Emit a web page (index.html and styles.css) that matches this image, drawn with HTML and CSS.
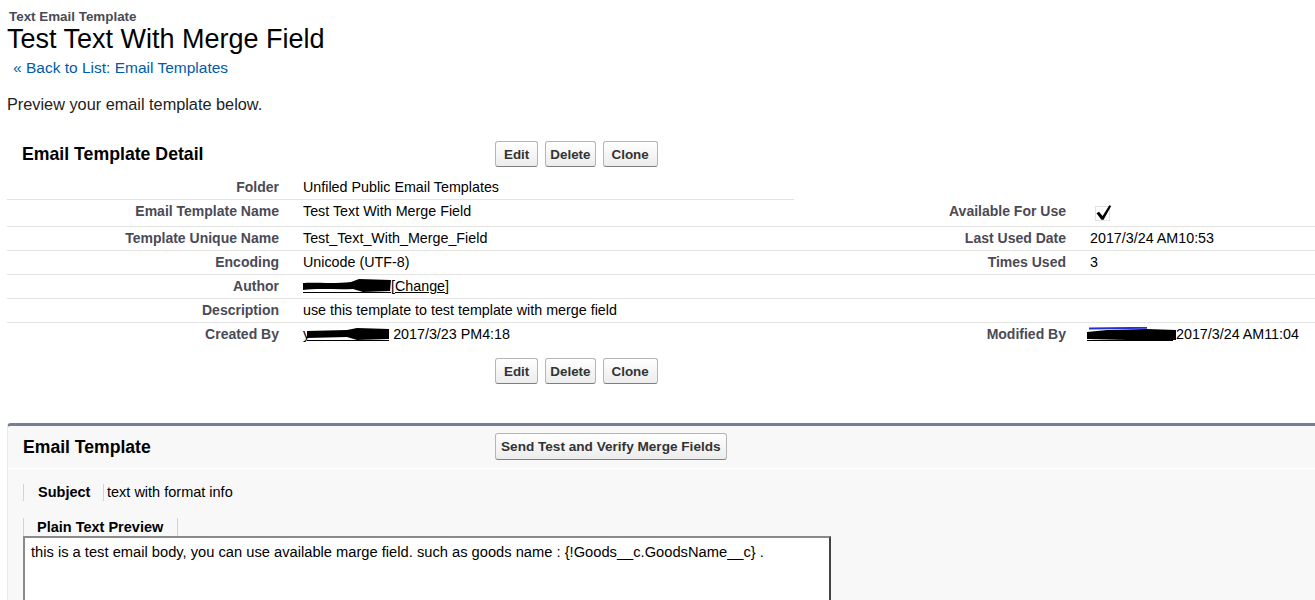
FILE: index.html
```html
<!DOCTYPE html>
<html>
<head>
<meta charset="utf-8">
<title>Test Text With Merge Field</title>
<link rel="stylesheet" href="styles.css">
</head>
<body>
<div class="page">
  <div class="page-head">
    <h2 class="page-type">Text Email Template</h2>
    <h1 class="page-title">Test Text With Merge Field</h1>
    <div class="back"><span class="raquo">«</span> <a href="#">Back to List: Email Templates</a></div>
  </div>
  <p class="intro">Preview your email template below.</p>

  <section class="detail">
    <div class="block-head">
      <div class="block-title"><h3>Email Template Detail</h3></div>
      <div class="btns">
        <button class="btn">Edit</button>
        <button class="btn btn-tight">Delete</button>
        <button class="btn">Clone</button>
      </div>
    </div>

    <div class="grid">
      <div class="lbl">Folder</div>
      <div class="val">Unfiled Public Email Templates</div>
      <div class="lbl nb"></div>
      <div class="val nb"></div>

      <div class="lbl">Email Template Name</div>
      <div class="val">Test Text With Merge Field</div>
      <div class="lbl">Available For Use</div>
      <div class="val"><svg class="chk" width="24" height="17" viewBox="0 0 24 17"><rect x="5.5" y="1.5" width="14" height="14" fill="none" stroke="#c4c4c4" stroke-dasharray="1 1"/><path d="M6.5 8.2 L9 6.8 L12.6 11 L19.3 0.2 L21.2 1 L13.6 14.8 L11.4 14.8 Z" fill="#000"/></svg></div>

      <div class="lbl">Template Unique Name</div>
      <div class="val">Test_Text_With_Merge_Field</div>
      <div class="lbl">Last Used Date</div>
      <div class="val">2017/3/24 AM10:53</div>

      <div class="lbl">Encoding</div>
      <div class="val">Unicode (UTF-8)</div>
      <div class="lbl">Times Used</div>
      <div class="val">3</div>

      <div class="lbl">Author</div>
      <div class="val"><svg class="redact" width="88" height="14" viewBox="0 0 88 14"><path d="M0 4 C10 3 30 5 48 3 L56 0 L88 1 L87 12 L60 13 L50 10 C35 11 15 9 0 11 Z" fill="#000"/><path d="M0 13.5 H88" stroke="#000" stroke-width="1"/></svg><a class="change" href="#">[Change]</a></div>
      <div class="lbl"></div>
      <div class="val"></div>

      <div class="lbl">Description</div>
      <div class="val">use this template to test template with merge field</div>
      <div class="lbl"></div>
      <div class="val"></div>

      <div class="lbl nb">Created By</div>
      <div class="val nb">y<svg class="redact redact-created" width="82" height="14" viewBox="0 0 82 14"><path d="M0 4 L40 3 L50 1 L82 2 L82 12 L50 13 L40 10 L0 11 Z" fill="#000"/><path d="M0 13.5 H82" stroke="#000" stroke-width="1"/></svg> 2017/3/23 PM4:18</div>
      <div class="lbl nb">Modified By</div>
      <div class="val nb"><svg class="redact redact-mod" width="89" height="14" viewBox="0 0 89 14"><path d="M0 5 L20 3 L60 2 L89 3 L89 13 L40 13 L0 12 Z" fill="#000"/><path d="M2 1.5 L60 0.8" stroke="#2430e0" stroke-width="2"/><path d="M0 13.5 H86" stroke="#000" stroke-width="1"/></svg>2017/3/24 AM11:04</div>
    </div>

    <div class="btns btns-bottom">
      <button class="btn">Edit</button>
      <button class="btn btn-tight">Delete</button>
      <button class="btn">Clone</button>
    </div>
  </section>

  <section class="tpl">
    <div class="block-head">
      <div class="block-title"><h3>Email Template</h3></div>
      <div class="btns">
        <button class="btn btn-lg">Send Test and Verify Merge Fields</button>
      </div>
    </div>
    <div class="subject">
      <div class="subject-lbl">Subject</div>
      <div class="subject-val">text with format info</div>
    </div>
    <div class="ptp-tab">Plain Text Preview</div>
    <div class="ptp-box">this is a test email body, you can use available marge field. such as goods name : {!Goods__c.GoodsName__c} .</div>
  </section>
</div>
</body>
</html>
```

FILE: styles.css
```css
html, body {
  margin: 0;
  padding: 0;
  overflow: hidden;
  background: #fff;
}

body {
  font-family: "Liberation Sans", Arial, sans-serif;
  color: #000;
}

.page {
  padding: 9px 0 0 7px;
}

.page-type {
  margin: 0;
  padding-left: 2px;
  font-size: 13.4px;
  line-height: 15px;
  font-weight: bold;
  color: #4a4a56;
}

.page-title {
  margin: 2px 0 0;
  font-size: 27px;
  line-height: 27px;
  font-weight: normal;
  color: #000;
}

.back {
  margin-top: 6px;
  padding-left: 6px;
  font-size: 15.5px;
  line-height: 17px;
  color: #015ba7;
}

.back a {
  color: #015ba7;
  text-decoration: none;
}

.intro {
  margin: 19px 0 0;
  font-size: 16.3px;
  line-height: 18px;
  color: #222;
}

.block-head {
  display: flex;
  align-items: center;
  margin-top: 22px;
  padding: 6px 0 9px;
}

.block-title {
  flex: 0 0 488px;
  box-sizing: border-box;
  padding-left: 15px;
}

.block-title h3 {
  margin: 0;
  font-size: 17.7px;
  line-height: 20px;
  font-weight: bold;
  color: #000;
}

.btns {
  display: flex;
  gap: 7px;
}

.btn {
  height: 26px;
  padding: 0 8px;
  border: 1px solid #b5b5b5;
  border-bottom-color: #7f7f7f;
  border-radius: 3px;
  background: linear-gradient(#ffffff, #ececec);
  font-family: inherit;
  font-size: 13.4px;
  font-weight: bold;
  color: #333;
}

.btn-tight {
  padding: 0 4px;
}

.btn-lg {
  height: 27px;
  padding: 0 5px;
  font-size: 13.6px;
}

.btns-bottom {
  padding: 12px 0 0 488px;
}

.grid {
  display: grid;
  grid-template-columns: 283px 504px 283px 1fr;
}

.lbl,
.val {
  padding-top: 4px;
  padding-bottom: 4px;
  border-bottom: 1px solid #e3e3e3;
  line-height: 15px;
  white-space: nowrap;
}

.lbl {
  padding-left: 2px;
  padding-right: 11px;
  text-align: right;
  font-size: 14px;
  font-weight: bold;
  color: #4a4a56;
}

.val {
  padding-left: 13px;
  padding-right: 8px;
  font-size: 14.3px;
  color: #000;
}

.nb {
  border-bottom: none;
}

.chk {
  display: block;
  margin-top: 1px;
}

.redact {
  vertical-align: -2px;
}

.redact-created {
  margin-left: -3px;
}

.redact-mod {
  margin-left: -3px;
}

.change {
  color: #000;
  text-decoration: underline;
}

.tpl {
  margin: 39px -30px 0 0;
  border: 1px solid #eaeaea;
  border-top: 3px solid #747e96;
  border-radius: 4px 4px 0 0;
  background: #f8f8f8;
  padding-bottom: 40px;
}

.tpl .block-head {
  margin-top: 0;
  padding: 7px 0 8px;
  border-bottom: 1px solid #fff;
}

.tpl .block-title {
  flex-basis: 487px;
}

.tpl .block-title h3 {
  font-size: 17.6px;
}

.subject {
  display: flex;
  margin: 15px 0 0 15px;
  border-left: 1px solid #d4d4d4;
  font-size: 14.5px;
  line-height: 17px;
}

.subject-lbl {
  box-sizing: border-box;
  width: 79px;
  padding-left: 14px;
  font-weight: bold;
}

.subject-val {
  border-left: 1px solid #d4d4d4;
  padding-left: 3px;
}

.ptp-tab {
  box-sizing: border-box;
  width: 155px;
  margin: 17px 0 0 15px;
  padding-left: 13px;
  border-left: 1px solid #d4d4d4;
  border-right: 1px solid #d4d4d4;
  font-size: 14.5px;
  line-height: 18px;
  font-weight: bold;
}

.ptp-box {
  box-sizing: border-box;
  width: 808px;
  height: 110px;
  margin-left: 15px;
  padding: 6px;
  border-top: 2px solid #8a8a8a;
  border-left: 2px solid #8a8a8a;
  border-right: 2px solid #444;
  background: #fff;
  font-size: 14.7px;
  line-height: 17px;
}
```
